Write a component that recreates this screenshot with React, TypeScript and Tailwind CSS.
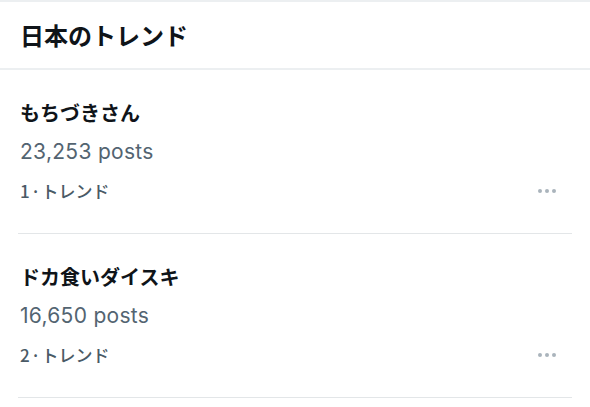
const trends = [
  { rank: 1, name: "もちづきさん", posts: "23,253" },
  { rank: 2, name: "ドカ食いダイスキ", posts: "16,650" },
];

const jp = "font-['Noto_Sans_CJK_JP','Noto_Sans',sans-serif]";

function MoreDots() {
  return (
    <div className="flex items-center gap-[3px] pr-[16px]">
      <span className="w-[4px] h-[4px] rounded-full bg-[#aab4bc]" />
      <span className="w-[4px] h-[4px] rounded-full bg-[#aab4bc]" />
      <span className="w-[4px] h-[4px] rounded-full bg-[#aab4bc]" />
    </div>
  );
}

function TrendItem({ rank, name, posts }: { rank: number; name: string; posts: string }) {
  return (
    <div className="mx-[18px] pl-[2px] pt-[31px] pb-[32px] border-b border-[#e3e6e8]">
      <p className={`${jp} text-[20px] leading-[24px] font-semibold text-[#0f1419]`}>{name}</p>
      <p className="mt-[15px] font-['Inter',sans-serif] text-[21px] leading-[24px] text-[#536471] tracking-[0.3px]">
        {posts} posts
      </p>
      <div className="mt-[17px] flex items-center justify-between h-[20px]">
        <p className={`${jp} text-[17px] leading-[20px] font-medium text-[#4a5a66]`}>
          {rank}<span className="mx-[1px]">·</span>トレンド
        </p>
        <MoreDots />
      </div>
    </div>
  );
}

export default function App() {
  return (
    <div className="w-[590px] h-[407px] bg-white overflow-hidden border-t-2 border-[#eceff1]">
      <div className="h-[68px] px-5 flex items-center border-b-2 border-[#eceff1]">
        <h1 className={`${jp} text-[24px] leading-[28px] font-bold text-[#0f1419]`}>日本のトレンド</h1>
      </div>
      {trends.map((t) => (
        <TrendItem key={t.rank} {...t} />
      ))}
    </div>
  );
}
